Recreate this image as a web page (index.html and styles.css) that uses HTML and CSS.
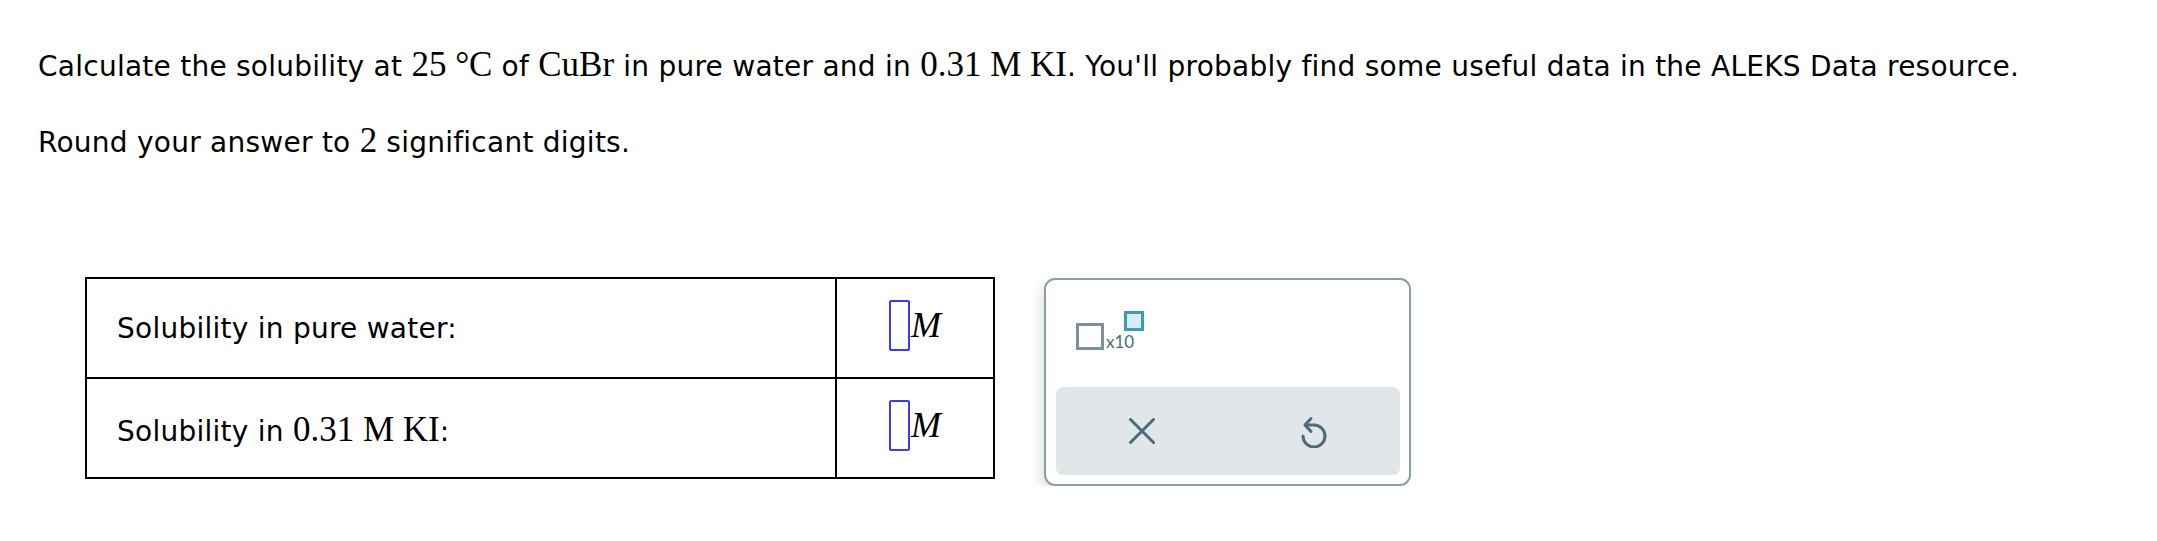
FILE: index.html
```html
<!DOCTYPE html>
<html>
<head>
<meta charset="utf-8">
<link rel="stylesheet" href="styles.css">
</head>
<body>
<div class="page">
  <p class="q">Calculate the solubility at <span class="m">25 °C</span> of <span class="m">CuBr</span> in pure water and in <span class="m">0.31 M KI</span>. You'll probably find some useful data in the ALEKS Data resource.</p>
  <p class="q q2">Round your answer to <span class="m">2</span> significant digits.</p>
  <div class="work">
    <div class="ans">
      <div class="lbl"><span>Solubility in pure water:</span></div>
      <div class="cell"><span class="box"></span><span class="unit">M</span></div>
      <div class="lbl"><span>Solubility in <span class="m">0.31 M KI</span>:</span></div>
      <div class="cell"><span class="box"></span><span class="unit">M</span></div>
    </div>
    <div class="panel">
      <div class="tools">
        <span class="sci"><span class="base"></span><span class="x10">x10</span><span class="exp"></span></span>
      </div>
      <div class="actions">
        <div class="slot">
          <svg class="ic" width="26" height="26" viewBox="0 0 26 26"><path d="M1.5 1.5 L24.5 24.5 M24.5 1.5 L1.5 24.5" stroke="#4a6b77" stroke-width="3" stroke-linecap="round" fill="none"/></svg>
        </div>
        <div class="slot">
          <svg class="ic" width="26" height="34" viewBox="0 0 26 34"><path d="M2 22 A11 11 0 1 0 13 11 L4.5 11" stroke="#4a6b77" stroke-width="3" fill="none" stroke-linecap="round"/><path d="M10 4.5 L4 11 L10 17.5" stroke="#4a6b77" stroke-width="3" fill="none" stroke-linecap="round" stroke-linejoin="round"/></svg>
        </div>
      </div>
    </div>
  </div>
</div>
</body>
</html>
```
FILE: styles.css
```css
html, body {
  margin: 0;
  padding: 0;
  background: #fff;
}
.page {
  padding: 40px 0 0 38px;
  font-family: "DejaVu Sans", Verdana, sans-serif;
  font-size: 28px;
  letter-spacing: 0.25px;
  color: #000;
}
.q {
  margin: 0;
  line-height: 50px;
}
.q2 {
  margin-top: 24px;
}
.m {
  font-family: "Liberation Serif", "Times New Roman", serif;
  font-size: 35px;
  letter-spacing: 0;
}
.work {
  display: flex;
  align-items: flex-start;
  gap: 49px;
  margin-top: 109px;
  margin-left: 47px;
}
.ans {
  display: grid;
  grid-template-columns: 748px 156px;
  grid-auto-rows: 98px;
  gap: 2px;
  padding: 2px;
  background: #000;
}
.lbl {
  background: #fff;
  display: flex;
  align-items: center;
  padding-left: 30px;
  line-height: 1;
  padding-top: 2px;
}
.cell {
  background: #fff;
  display: flex;
  align-items: center;
  justify-content: center;
  padding-bottom: 6px;
}
.box {
  display: inline-block;
  width: 17px;
  height: 47px;
  border: 2px solid #3a3aff;
  border-radius: 2px;
}
.unit {
  font-family: "Liberation Serif", "Times New Roman", serif;
  font-style: italic;
  font-size: 36px;
  line-height: 1;
  margin-left: 1px;
}
.panel {
  width: 367px;
  height: 208px;
  margin-top: 1px;
  border: 2px solid #8a9fa8;
  border-radius: 11px;
  box-sizing: border-box;
  box-shadow: -5px 6px 10px rgba(60, 80, 90, 0.12);
  padding: 0 9px 9px 10px;
  display: flex;
  flex-direction: column;
  background: #fff;
}
.tools {
  height: 107px;
  display: flex;
  align-items: flex-start;
  padding-left: 20px;
}
.sci {
  position: relative;
  display: flex;
  align-items: flex-end;
  margin-top: 43px;
}
.base {
  display: inline-block;
  width: 28px;
  height: 27px;
  border: 3px solid #7b929c;
  box-sizing: border-box;
}
.x10 {
  font-family: "Lato", "Open Sans", sans-serif;
  font-size: 17px;
  letter-spacing: 0;
  color: #4e6b77;
  line-height: 1;
  margin-left: 2px;
}
.exp {
  position: absolute;
  left: 48px;
  top: -12px;
  width: 20px;
  height: 20px;
  border: 3px solid #3d9ab3;
  background: #d5edf3;
  box-sizing: border-box;
}
.actions {
  flex: 1;
  background: #e1e6e8;
  border-radius: 7px;
  display: flex;
  align-items: center;
}
.slot {
  flex: 1;
  display: flex;
  justify-content: center;
  align-items: center;
}
.ic {
  display: block;
}
```
